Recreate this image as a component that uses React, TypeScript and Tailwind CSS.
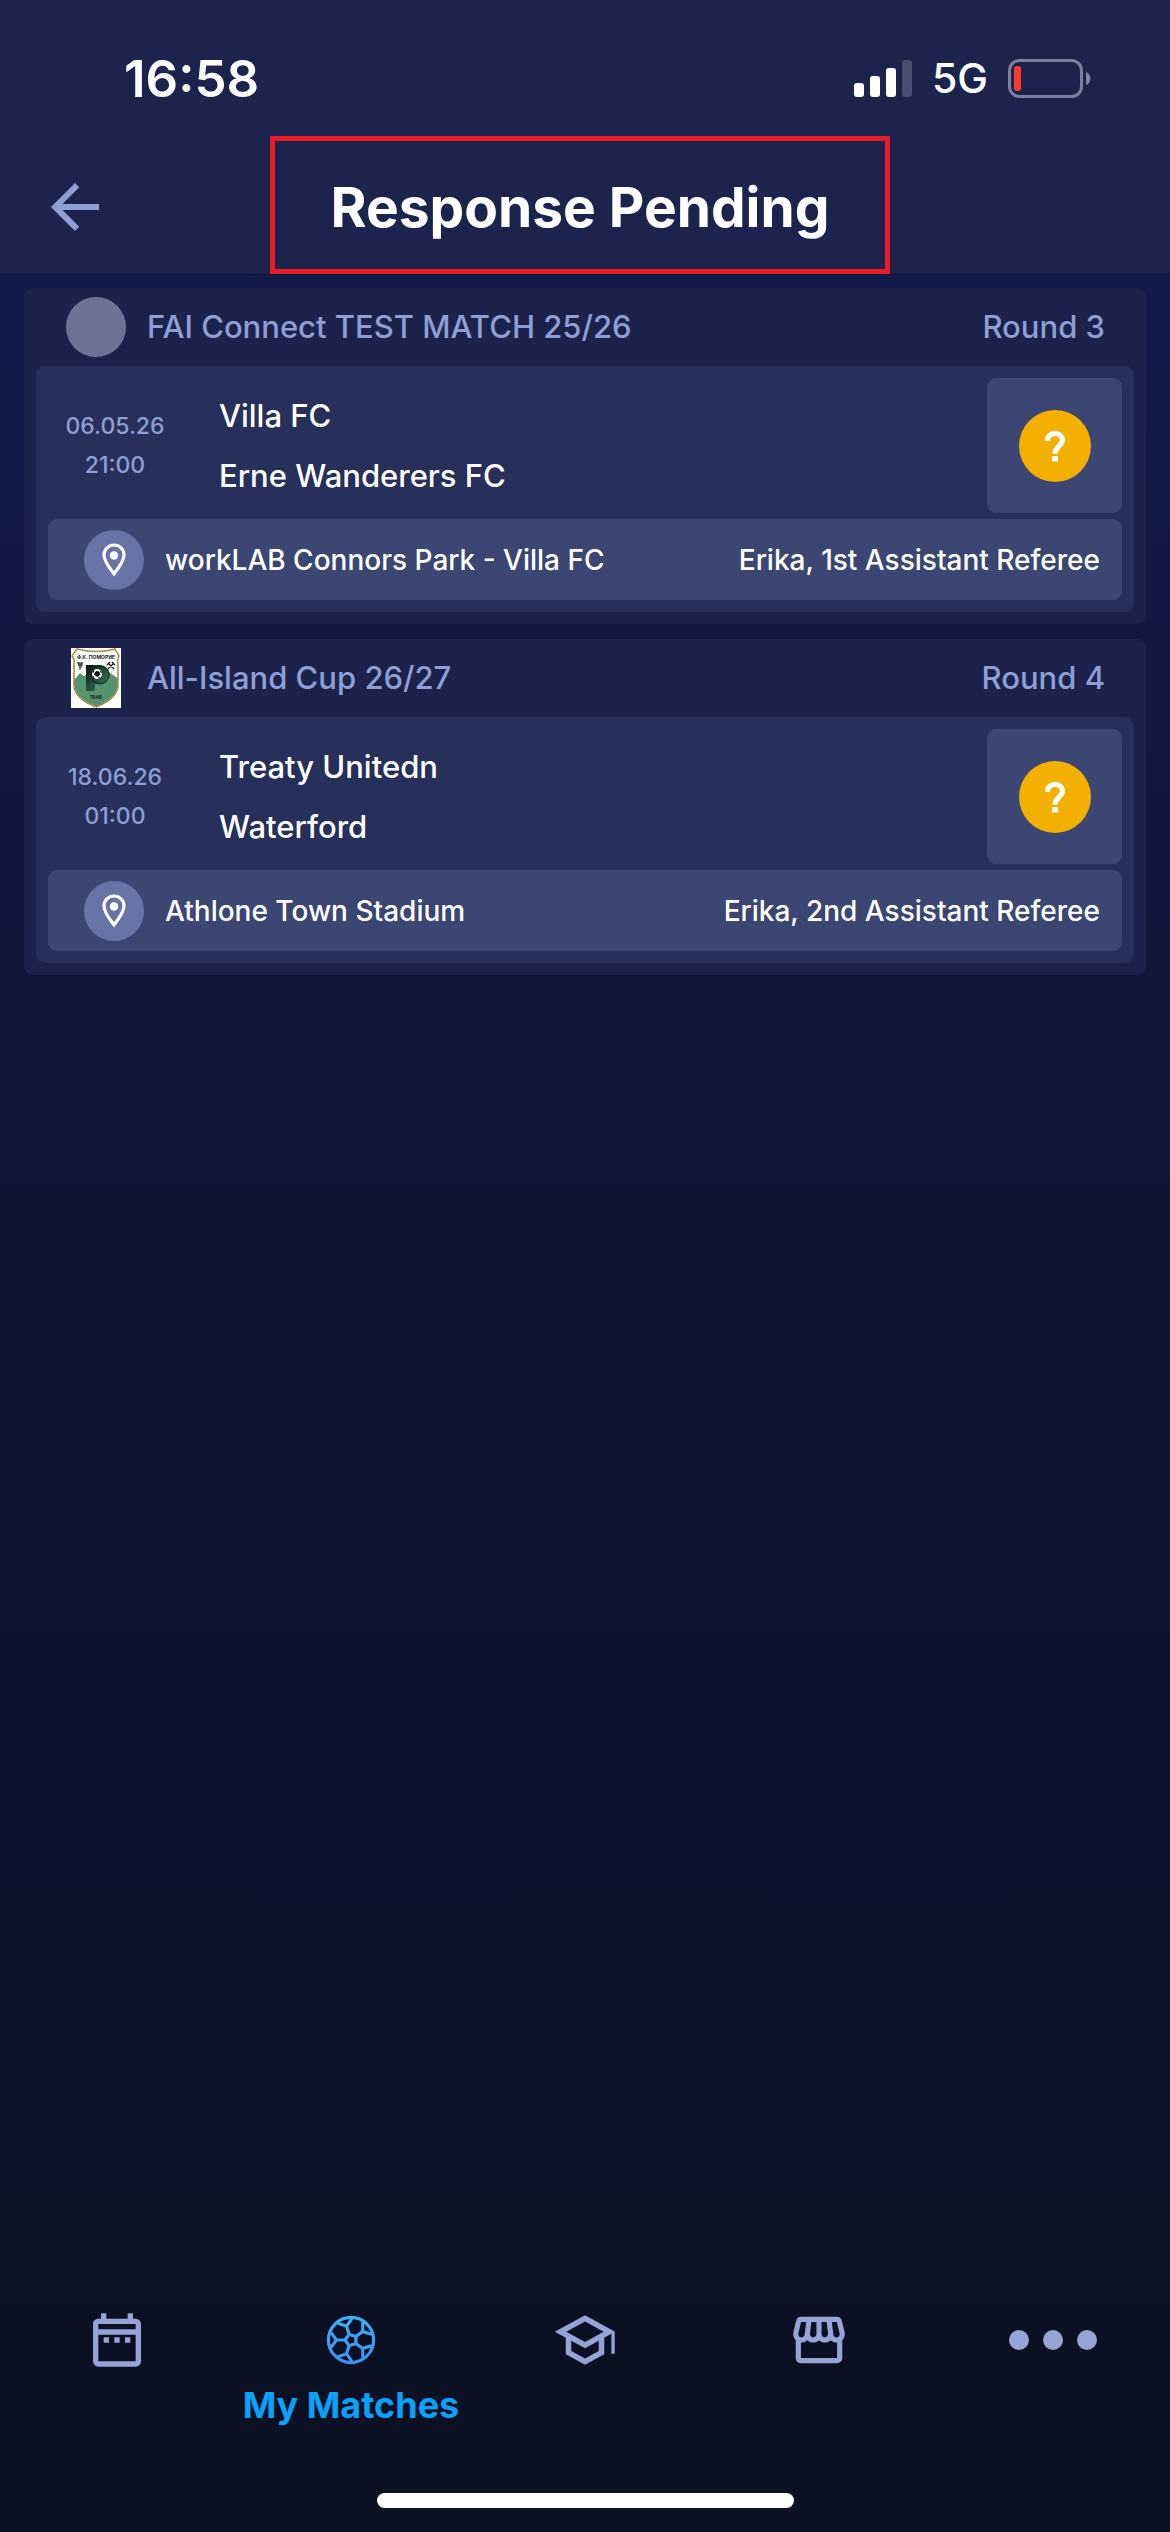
import type { ReactNode } from "react";
import { MdArrowBack, MdOutlineDateRange, MdOutlineStorefront } from "react-icons/md";

type Match = {
  competition: string;
  round: string;
  date: string;
  time: string;
  home: string;
  away: string;
  venue: string;
  role: string;
  crest?: boolean;
};

const MATCHES: Match[] = [
  {
    competition: "FAI Connect TEST MATCH 25/26",
    round: "Round 3",
    date: "06.05.26",
    time: "21:00",
    home: "Villa FC",
    away: "Erne Wanderers FC",
    venue: "workLAB Connors Park - Villa FC",
    role: "Erika, 1st Assistant Referee",
  },
  {
    competition: "All-Island Cup 26/27",
    round: "Round 4",
    date: "18.06.26",
    time: "01:00",
    home: "Treaty Unitedn",
    away: "Waterford",
    venue: "Athlone Town Stadium",
    role: "Erika, 2nd Assistant Referee",
    crest: true,
  },
];

function StatusBar() {
  return (
    <div className="flex h-[136px] items-center justify-between pt-5 pr-[79px] pl-[124px]">
      <span className="text-[51px] leading-none font-semibold">16:58</span>
      <div className="flex items-center">
        <svg width="58" height="37" viewBox="0 0 58 37" fill="#fff">
          <rect x="0" y="23" width="10" height="14" rx="3" />
          <rect x="16" y="16" width="10" height="21" rx="3" />
          <rect x="32" y="8" width="10" height="29" rx="3" />
          <rect x="48" y="0" width="10" height="37" rx="3" opacity=".2" />
        </svg>
        <span className="mx-5 text-[41px] leading-none font-medium">5G</span>
        <svg width="83" height="39" viewBox="0 0 83 39" fill="none">
          <rect x="1.5" y="1.5" width="72" height="36" rx="10" stroke="#7b809d" strokeWidth="3" />
          <rect x="6" y="7" width="7" height="25" rx="3" fill="#ff3b30" />
          <path d="M78 13c3 1 4.500 4 4.500 6.500S81 25 78 26z" fill="#8286a2" />
        </svg>
      </div>
    </div>
  );
}

function Crest() {
  return (
    <svg width="50" height="60" viewBox="0 0 50 60">
      <defs>
        <linearGradient id="crest-p" x1="0" y1="0" x2="1" y2="1">
          <stop offset="0" stopColor="#06120d" />
          <stop offset="1" stopColor="#3f8a63" />
        </linearGradient>
        <clipPath id="crest-shield">
          <path d="M6 1Q25 6 44 1L48 8Q46 12 47 16V38Q46 51 25 59Q4 51 3 38V16Q4 12 1 8Z" />
        </clipPath>
      </defs>
      <path d="M0 0h50v60H0z" fill="#fff" />
      <g clipPath="url(#crest-shield)">
        <path d="M0 29L4 31 9 25 13 28 20 24 38 24 42 27 45 29 50 33V60H0z" fill="#56936f" />
      </g>
      <path
        d="M6 1Q25 6 44 1L48 8Q46 12 47 16V38Q46 51 25 59Q4 51 3 38V16Q4 12 1 8Z"
        fill="none"
        stroke="#c6a55c"
        strokeWidth="1.600"
      />
      <path
        d="M6 1Q25 6 44 1L48 8Q46 12 47 16V38Q46 51 25 59Q4 51 3 38V16Q4 12 1 8Z"
        fill="none"
        stroke="#3c3319"
        strokeWidth=".7"
        strokeDasharray="1 1.500"
      />
      <path d="M15 17H29A9 9 0 0 1 29 36H24V43H15Z" fill="url(#crest-p)" />
      <circle cx="29" cy="27" r="9" fill="none" stroke="#0d2419" strokeWidth="1" />
      <circle cx="26" cy="26" r="5" fill="#fff" />
      <path d="M25 23.500l3 .5.500 3-2.500 1.500-2.500-2zM22 25l1-3M29 23l1.500 2M27 30l2-1M22 28l1 2" stroke="#111" fill="#111" />
      <path d="M6 15h6M7 17h5M8 19h3M9 15v7M7 14l1 4M11 14l-1 4" stroke="#2a2a2a" strokeWidth="1" fill="none" />
      <path d="M37 15l6 6M43 15l-6 6M36 17l3-3M41 14l3 3" stroke="#1c1c1c" strokeWidth="1.300" fill="none" />
      {/* club name on the scroll */}
      <text x="25" y="11" textAnchor="middle" fontSize="5" fontWeight="700" fill="#161616">
        Ф.К. ПОМОРИЕ
      </text>
      <text x="25" y="51" textAnchor="middle" fontSize="5" fontWeight="700" fill="#10261b">
        1946
      </text>
    </svg>
  );
}

function PinIcon() {
  return (
    <svg width="24" height="34" viewBox="0 0 24 34" fill="none">
      <path
        d="M12 2C6.500 2 2 6.500 2 12c0 6.500 6 13.500 10 18.800C16 25.500 22 18.500 22 12 22 6.500 17.500 2 12 2Z"
        stroke="#fff"
        strokeWidth="3.200"
      />
      <circle cx="12" cy="12.500" r="4.200" fill="#fff" />
    </svg>
  );
}

function QuestionIcon() {
  return (
    <svg width="22" height="32" viewBox="0 0 22 32" fill="none">
      <path
        d="M3.400 11C3.400 6 6.700 3.400 11 3.400S18.400 6.300 18.400 10.200C18.400 15.500 11 16.500 11 23.800"
        stroke="#fff"
        strokeWidth="5.200"
      />
      <path d="M8 26h6v5.500H8z" fill="#fff" />
    </svg>
  );
}

function MatchCard({ match }: { match: Match }) {
  return (
    <article className="rounded-[9px] bg-[#1b234d] px-3 pb-3">
      <header className="flex h-[78px] items-center pr-[29px] pl-[30px] text-[31px] text-[#8f9fd3]">
        <div className="flex w-[60px] justify-center">
          {match.crest ? <Crest /> : <span className="size-[60px] rounded-full bg-[#6c7399]" />}
        </div>
        <h2 className="ml-[21px] flex-1">{match.competition}</h2>
        <span>{match.round}</span>
      </header>
      <div className="rounded-[9px] bg-[#272f5b] p-3">
        <div className="flex items-center">
          <div className="w-[134px] text-center text-[23px] leading-[39px] text-[#8f9fd3]">
            <div>{match.date}</div>
            <div>{match.time}</div>
          </div>
          <div className="ml-[37px] flex-1 text-[31px] leading-[60px] text-white">
            <div>{match.home}</div>
            <div>{match.away}</div>
          </div>
          <button
            aria-label="Respond"
            className="flex size-[135px] items-center justify-center rounded-[9px] bg-[#3c4672]"
          >
            <span className="flex size-[72px] items-center justify-center rounded-full bg-[#f4b000]">
              <QuestionIcon />
            </span>
          </button>
        </div>
        <div className="mt-1.5 flex h-[81px] items-center rounded-[9px] bg-[#3c4672] pr-[22px] pl-9 text-[28px] text-white">
          <span className="flex size-[60px] items-center justify-center rounded-full bg-[#6874a5]">
            <PinIcon />
          </span>
          <span className="ml-[21px] flex-1">{match.venue}</span>
          <span>{match.role}</span>
        </div>
      </div>
    </article>
  );
}

// one spoke per corner of the centre pentagon
const SPOKES = [0, 72, 144, 216, 288];

function BallIcon() {
  return (
    <svg width="50" height="50" viewBox="-25 -25 50 50" fill="none">
      <defs>
        <linearGradient id="ball" gradientUnits="userSpaceOnUse" x1="0" y1="-24" x2="0" y2="24">
          <stop offset="0" stopColor="#3eb0f4" />
          <stop offset="1" stopColor="#3f8ff2" />
        </linearGradient>
        <mask id="ball-lines">
          <g stroke="#fff" strokeWidth="3.200">
            <circle r="22.600" />
            <path d="M-6 0L-1.900-5.700 4.900-3.500V3.500L-1.900 5.700Z" />
            {SPOKES.map((deg) => (
              <path key={deg} d="M-6 0H-14.500M-21-8L-18.500-5.500-14.500 0-18.500 5.500-21 8" transform={`rotate(${deg})`} />
            ))}
          </g>
        </mask>
      </defs>
      <path d="M-25-25h50v50h-50z" fill="url(#ball)" mask="url(#ball-lines)" />
    </svg>
  );
}

function CapIcon() {
  return (
    <svg width="66" height="66" viewBox="0 0 24 24" fill="currentColor">
      <path d="M12 3L1 9l4 2.180v6L12 21l7-3.820v-6l2.600-1.420V17h1.200V8.900L12 3zm6.820 6L12 12.720 5.180 9 12 5.280 18.820 9zM17 15.990l-5 2.730-5-2.730v-3.720L12 15l5-2.730v3.720z" />
    </svg>
  );
}

function MoreIcon() {
  return (
    <svg width="88" height="20" viewBox="0 0 88 20" fill="currentColor">
      <circle cx="10" cy="10" r="10" />
      <circle cx="44" cy="10" r="10" />
      <circle cx="78" cy="10" r="10" />
    </svg>
  );
}

const TABS: { name: string; icon: ReactNode; active?: boolean }[] = [
  { name: "Calendar", icon: <MdOutlineDateRange size={64} /> },
  { name: "My Matches", icon: <BallIcon />, active: true },
  { name: "Learning", icon: <CapIcon /> },
  { name: "Shop", icon: <MdOutlineStorefront size={62} /> },
  { name: "More", icon: <MoreIcon /> },
];

function TabBar() {
  return (
    <nav className="grid h-[190px] grid-cols-5 bg-[#0b1022] pt-1 text-[#95a3d6]">
      {TABS.map((tab) => (
        <a key={tab.name} href="#" aria-label={tab.name} className="flex flex-col items-center">
          <span className="flex h-[66px] items-center">{tab.icon}</span>
          {tab.active && (
            <span className="mt-2.5 text-[36px] leading-[44px] font-bold whitespace-nowrap text-[#0aa2ff]">
              {tab.name}
            </span>
          )}
        </a>
      ))}
    </nav>
  );
}

export default function App() {
  return (
    <div className="flex min-h-screen flex-col bg-linear-to-b from-[#111b4e] via-[#101537] to-[#0b1021] font-['Inter','Liberation_Sans',sans-serif] text-white">
      <div className="border-b border-[#0d1438] bg-[#1c234d]">
        <StatusBar />
        <div className="grid h-[138px] grid-cols-[1fr_620px_1fr] items-center pr-2.5">
          <button aria-label="Back" className="ml-[39px] justify-self-start pt-1 text-[#8f9fd3]">
            <MdArrowBack size={72} />
          </button>
          <h1 className="flex h-[138px] items-center justify-center border-[5px] border-[#e81d27] pt-1 text-[55px] font-bold">
            Response Pending
          </h1>
        </div>
      </div>
      <main className="flex flex-1 flex-col gap-[15px] px-6 pt-[13px] font-medium">
        {MATCHES.map((m) => (
          <MatchCard key={m.competition} match={m} />
        ))}
      </main>
      <TabBar />
      <div className="flex h-[39px] justify-center bg-[#0b1022]">
        <div className="h-[15px] w-[417px] rounded-full bg-white" />
      </div>
    </div>
  );
}
